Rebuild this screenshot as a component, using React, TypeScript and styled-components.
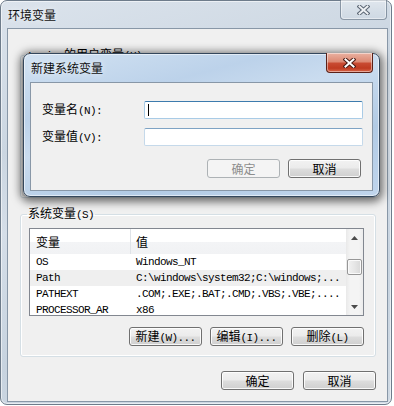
import React from 'react'
import styled, { createGlobalStyle, css } from 'styled-components'

const GlobalStyle = createGlobalStyle`
  html, body {
    margin: 0;
    padding: 0;
    background: #ffffff;
  }
  body {
    font-family: "Noto Sans CJK SC", "Liberation Sans", sans-serif;
    font-size: 12px;
    color: #000;
  }
  * {
    box-sizing: border-box;
  }
`

const Page = styled.div`
  position: relative;
  width: 394px;
  height: 406px;
  overflow: hidden;
`

const glass = css<{ $active?: boolean }>`
  display: flex;
  flex-direction: column;
  border: 1px solid ${(p) => (p.$active ? '#34475c' : '#6e7c8b')};
  border-radius: 7px;
  box-shadow: inset 0 0 0 1px rgba(255, 255, 255, 0.55);
  background: ${(p) =>
    p.$active
      ? 'linear-gradient(165deg, #d2e2f2 0%, #bcd2ea 28%, #cadcef 44%, #b2cbe5 70%, #c0d5ec 100%)'
      : 'linear-gradient(165deg, #dbe3ec 0%, #cbd6e1 30%, #d5dee8 46%, #c7d3df 72%, #d0dae4 100%)'};
`

const Window = styled.div<{ $active?: boolean }>`
  ${glass};
  width: 392px;
  height: 405px;
`

const Dialog = styled.div<{ $active?: boolean }>`
  ${glass};
  position: absolute;
  left: 23px;
  top: 53px;
  width: 357px;
  height: 144px;
  box-shadow: inset 0 0 0 1px rgba(255, 255, 255, 0.55), 0 2px 8px 3px rgba(0, 0, 0, 0.55);
`

const TitleBar = styled.div`
  display: flex;
  align-items: flex-start;
  height: 28px;
  padding-left: 7px;
`

const Title = styled.div`
  line-height: 27px;
  font-size: 12px;
  color: #101010;
  text-shadow: 0 0 6px rgba(255, 255, 255, 0.9);
`

const CloseButton = styled.div<{ $active?: boolean }>`
  display: flex;
  align-items: center;
  justify-content: center;
  margin: -1px ${(p) => (p.$active ? '6px' : '4px')} 0 auto;
  width: 47px;
  height: 20px;
  border: 1px solid ${(p) => (p.$active ? '#5b2118' : 'rgba(70, 88, 108, 0.55)')};
  border-top: none;
  border-radius: 0 0 4px 4px;
  box-shadow: inset 0 0 0 1px rgba(255, 255, 255, 0.45);
  background: ${(p) =>
    p.$active
      ? 'linear-gradient(180deg, #eab1a1 0%, #dd8a74 45%, #c84a31 55%, #bf3b21 80%, #d8664a 100%)'
      : 'linear-gradient(180deg, rgba(255,255,255,0.35) 0%, rgba(255,255,255,0.15) 50%, rgba(255,255,255,0) 100%)'};
`

const Client = styled.div<{ $dialog?: boolean }>`
  flex: 1;
  display: flex;
  flex-direction: column;
  margin: ${(p) => (p.$dialog ? '0 6px 5px 6px' : '0 3px 5px 6px')};
  padding: ${(p) => (p.$dialog ? '18px 9px 12px 11px' : '19px 11px 11px 12px')};
  border: 1px solid #8897a7;
  background: #f0f0f0;
`

const Latin = styled.span`
  font-family: "Liberation Mono", "DejaVu Sans Mono", monospace;
  font-size: 11px;
  letter-spacing: -0.6px;
`

const Group = styled.fieldset<{ $gap?: number }>`
  margin: 0 0 ${(p) => p.$gap ?? 0}px 0;
  padding: 7px 11px 10px 8px;
  min-width: 0;
  border: 1px solid #d5dfe5;
  border-radius: 3px;
  box-shadow: inset 0 0 0 1px #ffffff;
`

const Legend = styled.legend`
  margin-left: -2px;
  padding: 0 1px;
  font-size: 12px;
  line-height: 12px;
`

const ListView = styled.div`
  display: flex;
  width: 335px;
  height: 88px;
  border: 1px solid #828790;
  background: #ffffff;
`

const ListBody = styled.div`
  flex: 1;
  overflow: hidden;
`

const HeaderRow = styled.div`
  display: grid;
  grid-template-columns: 101px 1fr;
  height: 25px;
  background: linear-gradient(180deg, #ffffff 0%, #ffffff 50%, #f3f4f6 50%, #f1f2f4 100%);
`

const HeaderCell = styled.div<{ $divider?: boolean }>`
  padding-left: ${(p) => (p.$divider ? 6 : 5)}px;
  line-height: 25px;
  font-size: 12px;
  border-right: ${(p) => (p.$divider ? '1px solid #dfe3e8' : 'none')};
`

const Row = styled.div<{ $selected?: boolean }>`
  display: grid;
  grid-template-columns: 101px 1fr;
  height: 16px;
  line-height: 16px;
  white-space: nowrap;
  overflow: hidden;
  background: ${(p) => (p.$selected ? '#efefef' : 'transparent')};
  font-family: "Liberation Mono", "DejaVu Sans Mono", monospace;
  font-size: 11px;
  letter-spacing: -0.6px;
`

const Cell = styled.div<{ $first?: boolean }>`
  padding-left: ${(p) => (p.$first ? 6 : 5)}px;
  overflow: hidden;
`

const ScrollBar = styled.div`
  display: flex;
  flex-direction: column;
  width: 17px;
  background: linear-gradient(90deg, #e9e9e9 0%, #f4f4f4 25%, #f4f4f4 75%, #ececec 100%);
`

const ScrollArrow = styled.div`
  display: flex;
  align-items: center;
  justify-content: center;
  height: 17px;
`

const ScrollTrack = styled.div`
  flex: 1;
`

const Thumb = styled.div<{ $offset: number }>`
  margin: ${(p) => p.$offset}px 1px 0 1px;
  height: 16px;
  border: 1px solid #979797;
  border-radius: 2px;
  box-shadow: inset 0 0 0 1px #fafafa;
  background: linear-gradient(90deg, #f2f2f2 0%, #e6e6e6 50%, #d8d8d8 100%);
`

const ButtonRow = styled.div<{ $top: number; $gap: number; $right?: number }>`
  display: flex;
  justify-content: flex-end;
  gap: ${(p) => p.$gap}px;
  margin-top: ${(p) => p.$top}px;
  padding-right: ${(p) => p.$right ?? 0}px;
`

const Button = styled.button`
  width: 73px;
  height: 19px;
  padding: 0;
  font-family: "Noto Sans CJK SC", "Liberation Sans", sans-serif;
  font-size: 12px;
  line-height: 16px;
  color: #000;
  border: 1px solid #707070;
  border-radius: 3px;
  box-shadow: inset 0 0 0 1px rgba(255, 255, 255, 0.85);
  background: linear-gradient(180deg, #f2f2f2 0%, #ebebeb 48%, #dddddd 52%, #cfcfcf 100%);

  &:disabled {
    color: #8d8d8d;
    border-color: #adb2b5;
    box-shadow: none;
    background: #f4f4f4;
  }
`

const FormRow = styled.div<{ $gap?: number }>`
  display: flex;
  align-items: center;
  height: 18px;
  margin-bottom: ${(p) => p.$gap ?? 0}px;
`

const Label = styled.div`
  width: 102px;
  font-size: 12px;
  line-height: 18px;
  white-space: nowrap;
`

const TextBox = styled.div<{ $focused?: boolean }>`
  display: flex;
  align-items: center;
  width: 219px;
  height: 18px;
  padding-left: 3px;
  background: #ffffff;
  border: 1px solid ${(p) => (p.$focused ? '#a9cbe6' : '#c5d9ea')};
  border-top-color: ${(p) => (p.$focused ? '#3d7bad' : '#7ea3c4')};
  border-radius: 2px;
`

const Caret = styled.span`
  width: 1px;
  height: 12px;
  background: #000;
`

function CloseGlyph({ outline, fill }: { outline: string; fill: string }) {
  return (
    <svg width="13" height="10" viewBox="0 0 13 10">
      <g strokeLinecap="square">
        <path d="M2.5 1.5 L10.5 8.5 M10.5 1.5 L2.5 8.5" stroke={outline} strokeWidth="4" />
        <path d="M2.5 1.5 L10.5 8.5 M10.5 1.5 L2.5 8.5" stroke={fill} strokeWidth="2" />
      </g>
    </svg>
  )
}

function Arrow({ down }: { down?: boolean }) {
  return (
    <svg width="7" height="4" viewBox="0 0 7 4">
      <path d={down ? 'M0 0 L7 0 L3.5 4 Z' : 'M0 4 L7 4 L3.5 0 Z'} fill="#4b4b4b" />
    </svg>
  )
}

type Variable = { name: string; value: string }

const userVars: Variable[] = [
  { name: 'TEMP', value: '%USERPROFILE%\\AppData\\Local\\Temp' },
  { name: 'TMP', value: '%USERPROFILE%\\AppData\\Local\\Temp' },
]

const systemVars: Variable[] = [
  { name: 'OS', value: 'Windows_NT' },
  { name: 'Path', value: 'C:\\windows\\system32;C:\\windows;...' },
  { name: 'PATHEXT', value: '.COM;.EXE;.BAT;.CMD;.VBS;.VBE;....' },
  { name: 'PROCESSOR_AR', value: 'x86' },
]

function VariableList({ rows, selected, thumb }: { rows: Variable[]; selected?: number; thumb: number }) {
  return (
    <ListView>
      <ListBody>
        <HeaderRow>
          <HeaderCell $divider>变量</HeaderCell>
          <HeaderCell>值</HeaderCell>
        </HeaderRow>
        {rows.map((r, i) => (
          <Row key={r.name} $selected={i === selected}>
            <Cell $first>{r.name}</Cell>
            <Cell>{r.value}</Cell>
          </Row>
        ))}
      </ListBody>
      <ScrollBar>
        <ScrollArrow>
          <Arrow />
        </ScrollArrow>
        <ScrollTrack>
          <Thumb $offset={thumb} />
        </ScrollTrack>
        <ScrollArrow>
          <Arrow down />
        </ScrollArrow>
      </ScrollBar>
    </ListView>
  )
}

function GroupButtons() {
  return (
    <ButtonRow $top={11} $gap={8}>
      <Button>新建<Latin>(W)...</Latin></Button>
      <Button>编辑<Latin>(I)...</Latin></Button>
      <Button>删除<Latin>(L)</Latin></Button>
    </ButtonRow>
  )
}

export default function App() {
  return (
    <Page>
      <GlobalStyle />
      <Window>
        <TitleBar>
          <Title>环境变量</Title>
          <CloseButton>
            <CloseGlyph outline="#5b6674" fill="#eef1f4" />
          </CloseButton>
        </TitleBar>
        <Client>
          <Group $gap={9}>
            <Legend>
              <Latin>Louis </Latin>的用户变量<Latin>(U)</Latin>
            </Legend>
            <VariableList rows={userVars} thumb={0} />
            <GroupButtons />
          </Group>
          <Group>
            <Legend>
              系统变量<Latin>(S)</Latin>
            </Legend>
            <VariableList rows={systemVars} selected={1} thumb={13} />
            <GroupButtons />
          </Group>
          <ButtonRow $top={14} $gap={9}>
            <Button>确定</Button>
            <Button>取消</Button>
          </ButtonRow>
        </Client>
      </Window>

      <Dialog $active>
        <TitleBar>
          <Title>新建系统变量</Title>
          <CloseButton $active>
            <CloseGlyph outline="#4a1b14" fill="#ffffff" />
          </CloseButton>
        </TitleBar>
        <Client $dialog>
          <FormRow $gap={9}>
            <Label>
              变量名<Latin>(N):</Latin>
            </Label>
            <TextBox $focused>
              <Caret />
            </TextBox>
          </FormRow>
          <FormRow>
            <Label>
              变量值<Latin>(V):</Latin>
            </Label>
            <TextBox />
          </FormRow>
          <ButtonRow $top={13} $gap={8} $right={2}>
            <Button disabled>确定</Button>
            <Button>取消</Button>
          </ButtonRow>
        </Client>
      </Dialog>
    </Page>
  )
}
